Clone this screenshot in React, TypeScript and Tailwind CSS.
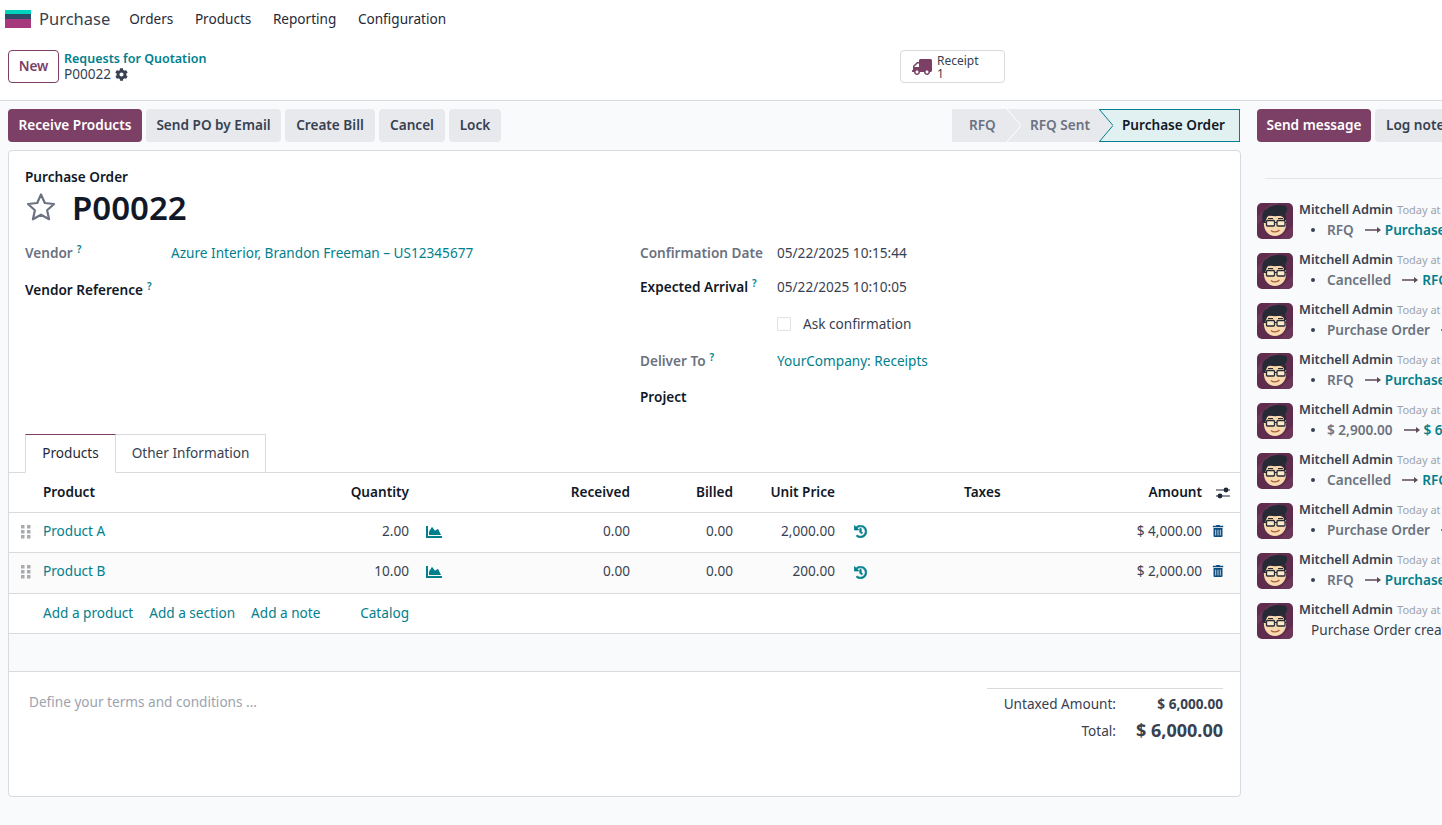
import type { ReactNode } from 'react';
import { FaCog, FaTruck, FaChartArea, FaHistory, FaTrashAlt } from 'react-icons/fa';

const link = 'text-[#017f8d]';
const rowGrid = 'grid grid-cols-[26px_382px_51px_170px_103px_102px_113px_1fr_30px] items-center';

const history: [string, string][] = [
  ['RFQ', 'Purchase Order'],
  ['Cancelled', 'RFQ'],
  ['Purchase Order', 'Cancelled'],
  ['RFQ', 'Purchase Order'],
  ['$ 2,900.00', '$ 6,000.00'],
  ['Cancelled', 'RFQ'],
  ['Purchase Order', 'Cancelled'],
  ['RFQ', 'Purchase Order'],
];

function Avatar() {
  return (
    <svg viewBox="0 0 36 36" className="w-9 h-9 shrink-0 rounded-[5px]">
      <rect width="36" height="36" fill="#5f2c4e" />
      <path d="M22 36 36 22v14zM0 14 14 0h8L0 22z" fill="#6b3658" />
      <path d="M7 18c-1 9 4 15 11 15s12-6 11-15c-1-7-21-8-22 0z" fill="#f9d9ae" />
      <path d="M6 20C4 12 6 7 10 6c3-4 12-5 19-3 2 3 1 6-1 8 1 2 1 4 1 6h-2c0-2-1-4-2-5-5 2-11 1-14 0-1 2-2 5-3 8z" fill="#262a35" />
      <path d="M11 15.500h5M21 15.500h5" stroke="#262a35" strokeWidth="1" />
      <rect x="9.500" y="17.500" width="8" height="5.500" rx="1" fill="#fdeacb" stroke="#262a35" strokeWidth="1.300" />
      <rect x="20" y="17.500" width="8" height="5.500" rx="1" fill="#fdeacb" stroke="#262a35" strokeWidth="1.300" />
      <path d="M17.500 19.500H20M6.500 19.500h3M28 19.500h1.500" stroke="#262a35" strokeWidth="1.200" />
      <path d="M14 27.500c2 2 6 2 8.500-.5" stroke="#a8603f" strokeWidth="1.200" fill="none" />
    </svg>
  );
}

function Grip() {
  return (
    <svg viewBox="0 0 10 14" className="w-[10px] h-[14px]">
      {[0, 5, 10].map((y) => (
        <g key={y} fill="#a8abb0">
          <rect x="0" y={y} width="3.500" height="3.500" />
          <rect x="6" y={y} width="3.500" height="3.500" />
        </g>
      ))}
    </svg>
  );
}

function Help() {
  return <sup className={`${link} text-[10px] font-semibold ml-[4px] -top-[5px]`}>?</sup>;
}

function ProductRow({ name, qty, price, amount, shaded }: { name: string; qty: string; price: string; amount: string; shaded?: boolean }) {
  const text = shaded ? 'pb-[6px]' : 'pb-[4px]';
  return (
    <div className={`${rowGrid} shrink-0 border-b border-[#d8dadd] ${shaded ? 'bg-[#fbfbfb] h-[41px]' : 'h-10'}`}>
      <div className="pl-3 pb-[2px]"><Grip /></div>
      <div className={`flex justify-between px-2 ${text}`}><span className={link}>{name}</span><span>{qty}</span></div>
      <div className={`pl-[9px] pb-[2px] ${link}`}><FaChartArea className="w-4 h-4" /></div>
      <div className={`text-right pr-2 ${text}`}>0.00</div>
      <div className={`text-right pr-2 ${text}`}>0.00</div>
      <div className={`text-right pr-2 ${text}`}>{price}</div>
      <div className={`pl-[11px] pb-[2px] ${link}`}><FaHistory className="w-[13px] h-[13px]" stroke="currentColor" strokeWidth={24} /></div>
      <div className={`text-right pr-2 ${text}`}>{amount}</div>
      <div className="pl-[2px] pb-[4px] text-[#0f4c81]"><FaTrashAlt className="w-3 h-3" /></div>
    </div>
  );
}

function Message({ children }: { children: ReactNode }) {
  return (
    <div className="flex gap-[6px] h-[50px]">
      <Avatar />
      <div className="min-w-0 -mt-[4px]">
        <div className="whitespace-nowrap leading-[19px]">
          <span className="font-semibold text-[12.8px] text-[#374151]">Mitchell Admin</span>
          <span className="text-[11px] text-[#9ca3af] ml-[4px]">Today at 10:15 AM</span>
        </div>
        {children}
      </div>
    </div>
  );
}

export default function App() {
  return (
    <div className="w-[1442px] h-[825px] overflow-hidden bg-white text-[13.6px] leading-[21px] text-[#374151] font-['Noto_Sans','Open_Sans',sans-serif] flex flex-col">
      <header className="h-[37px] flex items-center shrink-0">
        <svg viewBox="0 0 26 18" className="ml-[5px] w-[26px] h-[18px]">
          <rect width="26" height="5" fill="#00d3bd" />
          <rect y="4" width="26" height="5" fill="#2f4a66" />
          <rect y="9" width="26" height="9" fill="#a5397b" />
        </svg>
        <span className="ml-2 text-[16.500px] text-[#374151]">Purchase</span>
        <nav className="flex gap-[21.500px] ml-[19px] text-[#1f2937]">
          <span>Orders</span>
          <span>Products</span>
          <span>Reporting</span>
          <span>Configuration</span>
        </nav>
      </header>

      <div className="h-[64px] shrink-0 flex border-b border-[#d8dadd] pl-2">
        <button className="mt-[13px] h-[33px] w-[51px] pb-[2px] rounded-[4px] border border-[#7c4066] text-[#7c4066] font-semibold">New</button>
        <div className="ml-[5px] w-[836px] shrink-0 mt-[14px] leading-[16px]">
          <div className={`${link} font-semibold text-[12.500px]`}>Requests for Quotation</div>
          <div className="flex items-center gap-[4px] text-[#374151] -mt-px">P00022 <FaCog className="w-[13px] h-[13px]" /></div>
        </div>
        <div className="mt-[13px] h-[33px] w-[105px] rounded-[4px] border border-[#d8dadd] flex items-center pl-[11px] gap-[5px]">
          <FaTruck className="w-[20px] h-[20px] text-[#7c4066] -scale-x-100" />
          <div className="text-[12px] leading-[13px]">
            <div>Receipt</div>
            <div>1</div>
          </div>
        </div>
      </div>

      <div className="flex-1 bg-[#f9fafb] flex pl-2 min-h-0">
        <main className="w-[1233px] shrink-0 flex flex-col">
          <div className="flex justify-between items-center mt-2 h-[33px]">
            <div className="flex gap-1 font-semibold">
              <button className="h-[33px] w-[134px] pb-[2px] rounded-[4px] bg-[#7c4066] text-white">Receive Products</button>
              <button className="h-[33px] w-[135px] pb-[2px] rounded-[4px] bg-[#e7e9ed]">Send PO by Email</button>
              <button className="h-[33px] w-[90px] pb-[2px] rounded-[4px] bg-[#e7e9ed]">Create Bill</button>
              <button className="h-[33px] w-[66px] pb-[2px] rounded-[4px] bg-[#e7e9ed]">Cancel</button>
              <button className="h-[33px] w-[52px] pb-[2px] rounded-[4px] bg-[#e7e9ed]">Lock</button>
            </div>
            <div className="flex h-[33px] font-semibold mr-px">
              <div className="w-[55px] bg-[#e7e9ed] text-[#6b7280] flex items-center pl-[17px] pb-[2px]">RFQ</div>
              <div className="relative w-[92px] bg-[#e7e9ed] text-[#6b7280] flex items-center pl-[23px] pb-[2px]">
                RFQ Sent
                <svg viewBox="0 0 14 33" className="absolute left-0 top-0 w-[14px] h-[33px]"><path d="M0 0 14 16.500 0 33" fill="none" stroke="#fff" /></svg>
              </div>
              <div className="relative w-[141px] bg-[#e1f1f2] border border-[#017f8d] text-[#111827] flex items-center pl-[22px] pb-[2px]">
                Purchase Order
                <svg viewBox="0 0 14 33" className="absolute -left-px -top-px w-[14px] h-[33px]"><path d="M0 0 14 16.500 0 33z" fill="#e7e9ed" /><path d="M0 0 14 16.500 0 33" fill="none" stroke="#017f8d" /></svg>
              </div>
            </div>
          </div>

          <section className="mt-2 h-[647px] bg-white border border-[#d8dadd] rounded-[4px] flex flex-col">
            <div className="h-[283px] shrink-0 px-4 pt-[15px]">
              <div className="font-semibold text-[#111827]">Purchase Order</div>
              <div className="flex items-center gap-[15px] mt-[1px]">
                <svg viewBox="0 0 32 32" className="w-8 h-8 -mt-[2px]"><path d="M16 3.500 19.800 12l9.200 1-6.900 6.200 2 9.100L16 23.700 7.900 28.300l2-9.100L3 13l9.200-1z" fill="none" stroke="#6b7280" strokeWidth="2.200" strokeLinejoin="round" /></svg>
                <h1 className="text-[33px] leading-[40px] font-semibold text-[#111827]">P00022</h1>
              </div>
              <div className="flex mt-[14px]">
                <div className="w-[615px] shrink-0 flex flex-col gap-[16px]">
                  <div className="flex h-[21px]">
                    <div className="w-[146px] font-semibold text-[#6b7280]">Vendor<Help /></div>
                    <div className={link}>Azure Interior, Brandon Freeman – US12345677</div>
                  </div>
                  <div className="font-semibold text-[#111827]">Vendor Reference<Help /></div>
                </div>
                <div className="flex flex-col gap-[16px]">
                  <div className="flex h-[21px]">
                    <div className="w-[137px] font-semibold text-[#6b7280]">Confirmation Date</div>
                    <div>05/22/2025 10:15:44</div>
                  </div>
                  <div className="flex h-[21px] -mt-[3px]">
                    <div className="w-[137px] font-semibold text-[#111827]">Expected Arrival<Help /></div>
                    <div>05/22/2025 10:10:05</div>
                  </div>
                  <div className="flex h-[21px] items-center pl-[137px]">
                    <span className="w-[14px] h-[14px] border border-[#e0e2e6] rounded-[1px] bg-white" />
                    <span className="ml-3">Ask confirmation</span>
                  </div>
                  <div className="flex h-[21px]">
                    <div className="w-[137px] font-semibold text-[#6b7280]">Deliver To<Help /></div>
                    <div className={link}>YourCompany: Receipts</div>
                  </div>
                  <div className="font-semibold text-[#111827] -mt-px">Project</div>
                </div>
              </div>
            </div>

            <div className="h-[39px] shrink-0 flex border-b border-[#d8dadd] pl-4">
              <div className="w-[91px] h-[39px] pb-[2px] bg-white border border-[#d8dadd] border-b-white border-t-[#7c4066] flex items-center justify-center text-[#1f2937] relative z-10">Products</div>
              <div className="w-[150px] h-[38px] pb-[2px] border border-l-0 border-b-0 border-[#d8dadd] flex items-center justify-center">Other Information</div>
            </div>

            <div className={`${rowGrid} h-10 shrink-0 border-b border-[#d8dadd] font-semibold text-[#111827]`}>
              <div />
              <div className="flex justify-between px-2 pb-[2px]"><span>Product</span><span>Quantity</span></div>
              <div />
              <div className="text-right pr-2 pb-[2px]">Received</div>
              <div className="text-right pr-2 pb-[2px]">Billed</div>
              <div className="text-right pr-2 pb-[2px]">Unit Price</div>
              <div />
              <div className="flex justify-between px-2 pb-[2px]"><span>Taxes</span><span>Amount</span></div>
              <div className="pl-[6px]">
                <svg viewBox="0 0 14 12" className="w-[14px] h-3" fill="#1f2937">
                  <path d="M0 2.500h14v1H0zM0 8.500h14v1H0z" />
                  <circle cx="10" cy="3" r="2.400" />
                  <circle cx="4" cy="9" r="2.400" />
                </svg>
              </div>
            </div>
            <ProductRow name="Product A" qty="2.00" price="2,000.00" amount="$ 4,000.00" />
            <ProductRow name="Product B" qty="10.00" price="200.00" amount="$ 2,000.00" shaded />
            <div className="h-10 shrink-0 border-b border-[#d8dadd] flex items-center pb-[2px]">
              <div className="ml-[34px] w-[366px] flex justify-between">
                <div className={`flex gap-4 ${link}`}>
                  <span>Add a product</span>
                  <span>Add a section</span>
                  <span>Add a note</span>
                </div>
                <span className={link}>Catalog</span>
              </div>
            </div>
            <div className="h-[38px] shrink-0 bg-[#f9fafb] border-b border-[#d8dadd]" />

            <div className="flex-1 flex justify-between pl-5 pr-[17px] pt-4">
              <div className="text-[#9ca3af] pt-[3px]">Define your terms and conditions ...</div>
              <div className="w-[236px] border-t border-[#d8dadd] h-fit pt-[4px]">
                <div className="flex justify-end items-center h-[21px]">
                  <span>Untaxed Amount:</span>
                  <span className="w-[107px] text-right font-bold">$ 6,000.00</span>
                </div>
                <div className="flex justify-end items-center h-[32px]">
                  <span>Total:</span>
                  <span className="w-[107px] text-right font-bold text-[18px]">$ 6,000.00</span>
                </div>
              </div>
            </div>
          </section>
        </main>

        <aside className="ml-4 flex-1 min-w-0 overflow-hidden">
          <div className="flex gap-1 mt-2 font-semibold">
            <button className="h-[33px] w-[114px] pb-[2px] shrink-0 rounded-[4px] bg-[#7c4066] text-white">Send message</button>
            <button className="h-[33px] w-[80px] pb-[2px] shrink-0 rounded-[4px] bg-[#e7e9ed] text-left pl-[11px] whitespace-nowrap">Log note</button>
          </div>
          <div className="ml-2 mt-[36px] border-t border-[#e3e5e8]" />
          <div className="mt-6 flex flex-col">
            {history.map(([from, to], i) => (
              <Message key={i}>
                <div className="flex items-center whitespace-nowrap">
                  <span className="w-[4px] h-[4px] shrink-0 rounded-full bg-[#374151] ml-3 mr-3" />
                  <span className="font-semibold text-[#6b7280] shrink-0">{from}</span>
                  <svg viewBox="0 0 16 8" className="w-4 h-2 shrink-0 ml-[11px] mr-1" fill="#5f4a58">
                    <path d="M0 3.300h12V1l4 3-4 3V4.700H0z" />
                  </svg>
                  <span className={`font-semibold shrink-0 ${link}`}>{to}</span>
                </div>
              </Message>
            ))}
            <Message><div className="pl-3 whitespace-nowrap">Purchase Order created</div></Message>
          </div>
        </aside>
      </div>
    </div>
  );
}
